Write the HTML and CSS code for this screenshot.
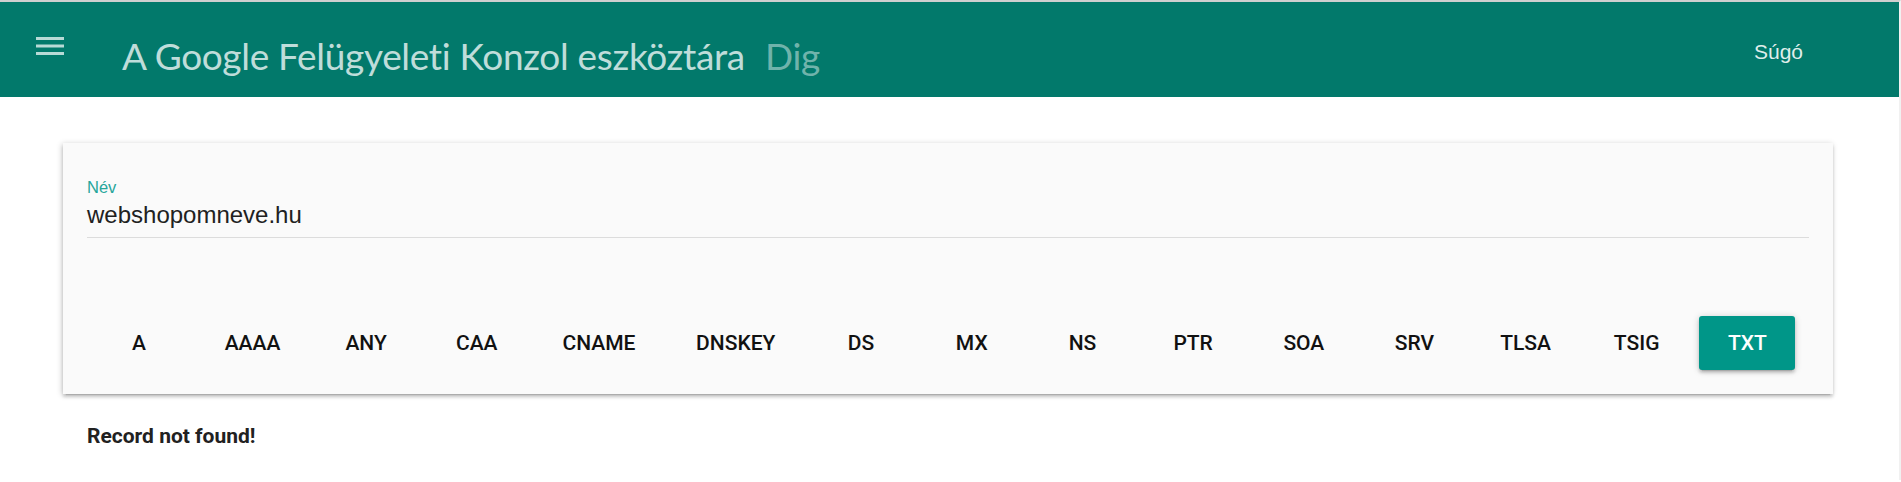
FILE: index.html
```html
<!DOCTYPE html>
<html lang="hu">
<head>
<meta charset="utf-8">
<title>Dig</title>
<link rel="stylesheet" href="styles.css">
</head>
<body>
<header class="topbar">
  <button class="menu-btn" aria-label="Menü">
    <svg width="28" height="18" viewBox="0 0 28 18"><rect x="0" y="0" width="28" height="3"/><rect x="0" y="7.5" width="28" height="3"/><rect x="0" y="15" width="28" height="3"/></svg>
  </button>
  <div class="title">A Google Felügyeleti Konzol eszköztára<span class="sub">Dig</span></div>
  <a class="help" href="#">Súgó</a>
</header>
<main class="content">
  <section class="card">
    <div class="field">
      <label class="field-label">Név</label>
      <div class="field-input">webshopomneve.hu</div>
    </div>
    <div class="types">
      <button class="type-btn">A</button>
      <button class="type-btn">AAAA</button>
      <button class="type-btn">ANY</button>
      <button class="type-btn">CAA</button>
      <button class="type-btn">CNAME</button>
      <button class="type-btn">DNSKEY</button>
      <button class="type-btn">DS</button>
      <button class="type-btn">MX</button>
      <button class="type-btn">NS</button>
      <button class="type-btn">PTR</button>
      <button class="type-btn">SOA</button>
      <button class="type-btn">SRV</button>
      <button class="type-btn">TLSA</button>
      <button class="type-btn">TSIG</button>
      <button class="type-btn active">TXT</button>
    </div>
  </section>
  <p class="result">Record not found!</p>
</main>
</body>
</html>
```
FILE: styles.css
```css
html, body {
  margin: 0;
  padding: 0;
}
body {
  background: #ffffff;
  border-top: 2px solid #cfcfcf;
  border-right: 2px solid #f1f1f1;
  font-family: Roboto, "Liberation Sans", sans-serif;
  min-height: 478px;
}
.topbar {
  display: flex;
  align-items: flex-start;
  height: 95px;
  background: #02796b;
}
.menu-btn {
  margin: 35px 0 0 36px;
  padding: 0;
  border: 0;
  background: none;
  width: 28px;
  height: 18px;
  display: block;
}
.menu-btn svg {
  display: block;
  fill: rgba(255, 255, 255, 0.72);
}
.title {
  margin: 35px 0 0 58px;
  font-family: Lato, "Open Sans", sans-serif;
  font-size: 37px;
  line-height: 37px;
  letter-spacing: -0.32px;
  color: rgba(255, 255, 255, 0.76);
  white-space: nowrap;
}
.title .sub {
  margin-left: 20px;
  color: rgba(255, 255, 255, 0.45);
}
.help {
  margin: 39px 96px 0 auto;
  font-family: "Liberation Sans", Arial, sans-serif;
  font-size: 21px;
  line-height: 21px;
  color: rgba(255, 255, 255, 0.88);
  text-decoration: none;
}
.content {
  padding: 46px 66px 0 63px;
}
.card {
  background: #fafafa;
  padding: 24px;
  box-shadow: 0 3px 3px 0 rgba(0, 0, 0, 0.14), 0 4px 1px -3px rgba(0, 0, 0, 0.12), -1px 1px 6px 0 rgba(0, 0, 0, 0.2);
}
.field {
  padding-top: 10px;
  border-bottom: 1px solid #dcdcdc;
}
.field-label {
  display: block;
  font-family: "Liberation Sans", Arial, sans-serif;
  font-size: 16.5px;
  line-height: 20px;
  color: #26a69a;
}
.field-input {
  margin-top: 3px;
  padding-bottom: 7px;
  font-family: "Liberation Sans", Arial, sans-serif;
  font-size: 24px;
  line-height: 30px;
  color: #212121;
}
.types {
  display: flex;
  gap: 14.7px;
  margin-top: 78px;
  padding-left: 4px;
}
.type-btn {
  box-sizing: border-box;
  min-width: 96px;
  height: 54px;
  padding: 0 23px;
  border: 0;
  border-radius: 3px;
  background: transparent;
  font-family: Roboto, sans-serif;
  font-weight: 500;
  font-size: 21px;
  line-height: 54px;
  color: #111111;
  white-space: nowrap;
}
.type-btn.active {
  background: #009688;
  color: #ffffff;
  box-shadow: 0 3px 3px 0 rgba(0, 0, 0, 0.14), 0 4px 1px -3px rgba(0, 0, 0, 0.12), 0 1px 7px 0 rgba(0, 0, 0, 0.2);
}
.result {
  margin: 27px 0 0 24px;
  font-family: Roboto, sans-serif;
  font-weight: 700;
  font-size: 21px;
  line-height: 30px;
  color: #212121;
}
```
